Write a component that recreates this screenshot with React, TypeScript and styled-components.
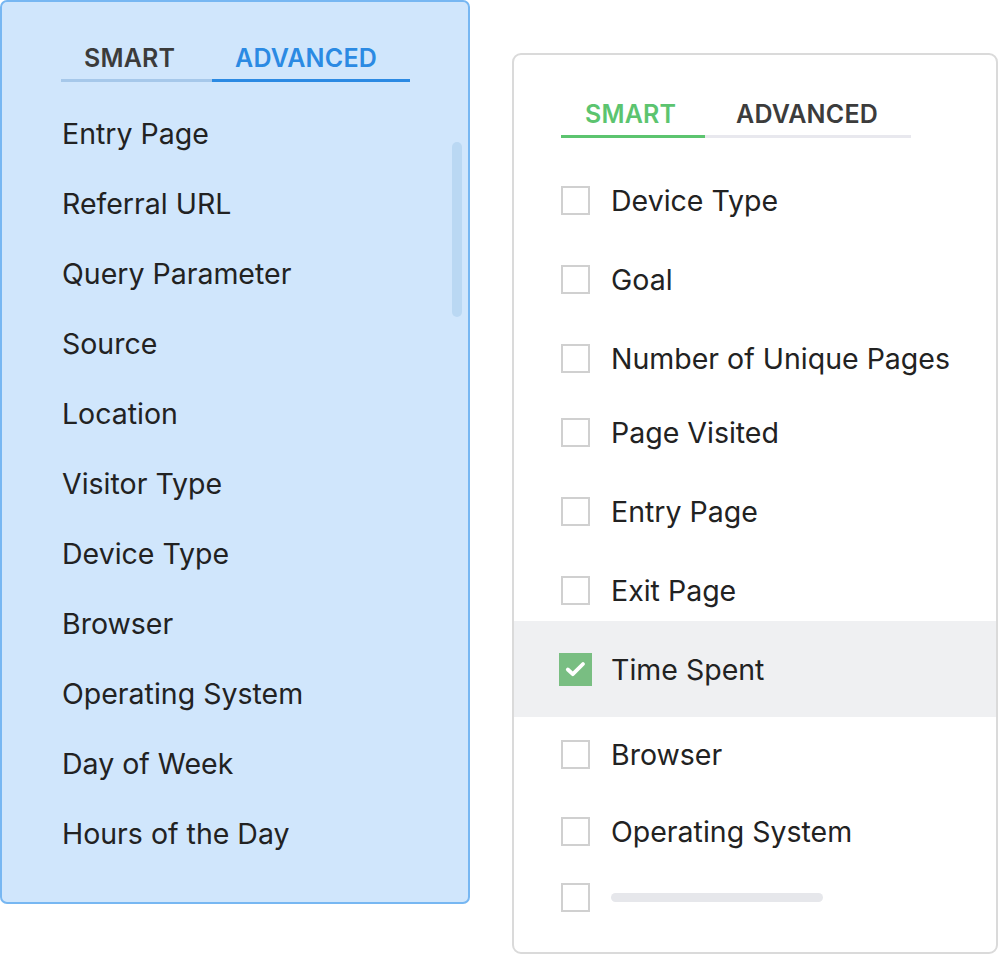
import React from "react";
import styled, { createGlobalStyle } from "styled-components";

const Global = createGlobalStyle`
  html, body { margin: 0; padding: 0; background: #ffffff; }
  body { font-family: Inter, "Noto Sans", "Liberation Sans", sans-serif; color: #222; }
  * { box-sizing: border-box; }
`;

const Page = styled.div`
  display: flex;
  align-items: flex-start;
  width: 999px;
  height: 955px;
`;

const LeftPanel = styled.div`
  position: relative;
  width: 470px;
  height: 904px;
  background: #d0e6fc;
  border: 2px solid #77b7f2;
  border-radius: 7px;
  padding: 39px 0 0 59px;
`;

const RightPanel = styled.div`
  margin-left: 42px;
  margin-top: 53px;
  width: 486px;
  height: 901px;
  background: #fff;
  border: 2px solid #dadada;
  border-radius: 9px;
  padding-top: 42px;
`;

const Tabs = styled.div<{ $ml: number }>`
  display: flex;
  margin-left: ${(p) => p.$ml}px;
`;

const Tab = styled.div<{ $w: number; $pl: number; $color: string; $line: string }>`
  width: ${(p) => p.$w}px;
  padding-left: ${(p) => p.$pl}px;
  height: 41px;
  font-size: 25px;
  font-weight: 600;
  letter-spacing: 0.2px;
  color: ${(p) => p.$color};
  border-bottom: 3px solid ${(p) => p.$line};
  line-height: 34px;
  white-space: nowrap;
`;

const List = styled.div`
  display: flex;
  flex-direction: column;
  padding-top: 16px;
`;

const Item = styled.div`
  height: 70px;
  display: flex;
  align-items: center;
  font-size: 28.5px;
  color: #222;
  padding-left: 1px;
`;

const Scrollbar = styled.div`
  position: absolute;
  left: 450px;
  top: 140px;
  width: 10px;
  height: 175px;
  border-radius: 5px;
  background: #bad8f3;
`;

const CheckList = styled.div`
  display: flex;
  flex-direction: column;
`;

const CheckRow = styled.div<{ $mt: number; $h?: number; $active?: boolean }>`
  margin-top: ${(p) => p.$mt}px;
  height: ${(p) => p.$h ?? 40}px;
  display: flex;
  align-items: center;
  gap: 21px;
  padding-left: ${(p) => (p.$active ? 45 : 47)}px;
  background: ${(p) => (p.$active ? "#eff0f2" : "transparent")};
  font-size: 28.5px;
  color: #222;
  white-space: nowrap;
`;

const Box = styled.div`
  width: 29px;
  height: 29px;
  border: 2px solid #d0d0d0;
  background: #fff;
  flex-shrink: 0;
`;

const CheckedBox = styled.div`
  width: 33px;
  height: 33px;
  background: #79be82;
  display: flex;
  align-items: center;
  justify-content: center;
  flex-shrink: 0;
  margin-right: -2px;
`;

const Placeholder = styled.div`
  width: 212px;
  height: 9px;
  border-radius: 5px;
  background: #e6e7eb;
`;

const leftItems = [
  "Entry Page",
  "Referral URL",
  "Query Parameter",
  "Source",
  "Location",
  "Visitor Type",
  "Device Type",
  "Browser",
  "Operating System",
  "Day of Week",
  "Hours of the Day",
];

const rightItems: { label: string; mt: number }[] = [
  { label: "Device Type", mt: 42 },
  { label: "Goal", mt: 39 },
  { label: "Number of Unique Pages", mt: 39 },
  { label: "Page Visited", mt: 34 },
  { label: "Entry Page", mt: 39 },
  { label: "Exit Page", mt: 39 },
];

export default function App() {
  return (
    <>
      <Global />
      <Page>
        <LeftPanel>
          <Tabs $ml={0}>
            <Tab $w={151} $pl={23} $color="#3b3b3b" $line="#a6c8ea">SMART</Tab>
            <Tab $w={198} $pl={23} $color="#2b8ae3" $line="#2b8ae3">ADVANCED</Tab>
          </Tabs>
          <List>
            {leftItems.map((t) => (
              <Item key={t}>{t}</Item>
            ))}
          </List>
          <Scrollbar />
        </LeftPanel>
        <RightPanel>
          <Tabs $ml={47}>
            <Tab $w={144} $pl={24} $color="#5cc46f" $line="#5cc46f">SMART</Tab>
            <Tab $w={206} $pl={31} $color="#3c3c3c" $line="#e8e8ee">ADVANCED</Tab>
          </Tabs>
          <CheckList>
            {rightItems.map((r) => (
              <CheckRow key={r.label} $mt={r.mt}>
                <Box />
                {r.label}
              </CheckRow>
            ))}
            <CheckRow $mt={11} $h={96} $active>
              <CheckedBox>
                <svg width="21" height="17" viewBox="0 0 21 17">
                  <path d="M2.8 8.5 L7.8 13.2 L18 3" fill="none" stroke="#fff" strokeWidth="3.8" strokeLinecap="round" strokeLinejoin="round" />
                </svg>
              </CheckedBox>
              Time Spent
            </CheckRow>
            <CheckRow $mt={17}>
              <Box />
              Browser
            </CheckRow>
            <CheckRow $mt={37}>
              <Box />
              Operating System
            </CheckRow>
            <CheckRow $mt={26}>
              <Box />
              <Placeholder />
            </CheckRow>
          </CheckList>
        </RightPanel>
      </Page>
    </>
  );
}
